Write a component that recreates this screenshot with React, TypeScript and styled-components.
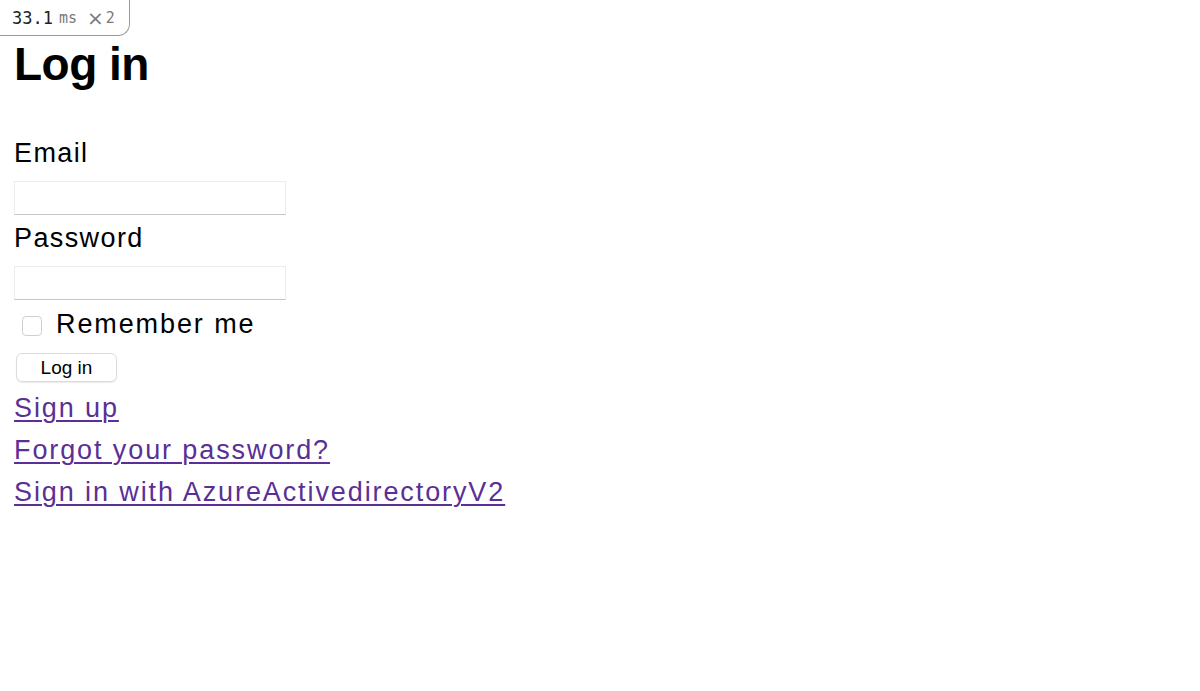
import styled, { createGlobalStyle } from 'styled-components';

const GlobalStyle = createGlobalStyle`
  html, body {
    margin: 0;
    padding: 0;
    background: #ffffff;
  }
  body {
    font-family: "Liberation Sans", Arial, sans-serif;
    color: #000000;
  }
`;

const App = () => {
  return (
    <>
      <GlobalStyle />
      <Profiler>
        <Timing>33.1</Timing>
        <Unit>ms</Unit>
        <Count>
          <Times>×</Times>2
        </Count>
      </Profiler>
      <Page>
        <Heading>Log in</Heading>
        <Form>
          <Field>
            <Label htmlFor="email">Email</Label>
            <Input id="email" type="email" />
          </Field>
          <Field>
            <Label htmlFor="password">Password</Label>
            <Input id="password" type="password" />
          </Field>
          <CheckRow>
            <CheckBox type="checkbox" id="remember" />
            <CheckLabel htmlFor="remember">Remember me</CheckLabel>
          </CheckRow>
          <SubmitButton type="button">Log in</SubmitButton>
        </Form>
        <Links>
          <LinkItem href="#">Sign up</LinkItem>
          <LinkItem href="#">Forgot your password?</LinkItem>
          <LinkItem href="#">Sign in with AzureActivedirectoryV2</LinkItem>
        </Links>
      </Page>
    </>
  );
};

export default App;

const Profiler = styled.div`
  position: absolute;
  top: 0;
  left: 0;
  width: 130px;
  height: 36px;
  box-sizing: border-box;
  display: flex;
  align-items: center;
  padding-left: 12px;
  gap: 6px;
  border-right: 1px solid #9a9a9a;
  border-bottom: 1px solid #9a9a9a;
  border-bottom-right-radius: 12px;
  background: #ffffff;
  font-family: "DejaVu Sans Mono", "Liberation Mono", monospace;
`;

const Timing = styled.span`
  font-size: 17px;
  color: #222222;
`;

const Unit = styled.span`
  font-size: 15px;
  color: #7a7a7a;
  margin-right: 4px;
`;

const Count = styled.span`
  display: flex;
  align-items: center;
  gap: 2px;
  font-size: 15px;
  color: #7a7a7a;
`;

const Times = styled.span`
  font-family: "DejaVu Sans", sans-serif;
  font-size: 20px;
  line-height: 1;
`;

const Page = styled.div`
  padding: 38px 14px 0;
`;

const Heading = styled.h1`
  margin: 0;
  font-size: 46px;
  line-height: 53px;
  font-weight: 700;
  letter-spacing: -0.5px;
`;

const Form = styled.form`
  display: flex;
  flex-direction: column;
  margin-top: 41px;
`;

const Field = styled.div`
  display: flex;
  flex-direction: column;
  align-items: flex-start;
  gap: 7px;
  margin-bottom: 2px;
`;

const Label = styled.label`
  font-size: 27px;
  line-height: 42px;
  letter-spacing: 1.4px;
`;

const Input = styled.input`
  width: 272px;
  height: 34px;
  box-sizing: border-box;
  margin: 0;
  border: 1px solid #ececec;
  border-bottom-color: #c6c6c6;
  background: #ffffff;
  outline: none;
`;

const CheckRow = styled.div`
  display: flex;
  align-items: center;
  gap: 14px;
  padding-left: 8px;
  height: 43px;
`;

const CheckBox = styled.input`
  appearance: none;
  width: 20px;
  height: 20px;
  margin: 4px 0 0;
  border: 1px solid #cfcfcf;
  border-radius: 4px;
  background: #ffffff;
`;

const CheckLabel = styled.label`
  font-size: 27px;
  line-height: 42px;
  letter-spacing: 1.9px;
`;

const SubmitButton = styled.button`
  align-self: flex-start;
  margin: 8px 0 0 2px;
  width: 101px;
  height: 29px;
  border: 1px solid #dcdcdc;
  border-radius: 6px;
  background: #ffffff;
  box-shadow: 0 1px 1px rgba(0, 0, 0, 0.08);
  font-family: "Liberation Sans", Arial, sans-serif;
  font-size: 19px;
  color: #000000;
  padding: 0;
`;

const Links = styled.div`
  display: flex;
  flex-direction: column;
  align-items: flex-start;
  margin-top: 5px;
`;

const LinkItem = styled.a`
  font-size: 27px;
  line-height: 42px;
  letter-spacing: 1.9px;
  color: #5b2f95;
  text-decoration: underline;
  text-underline-offset: 3px;
  text-decoration-thickness: 1.5px;
`;
